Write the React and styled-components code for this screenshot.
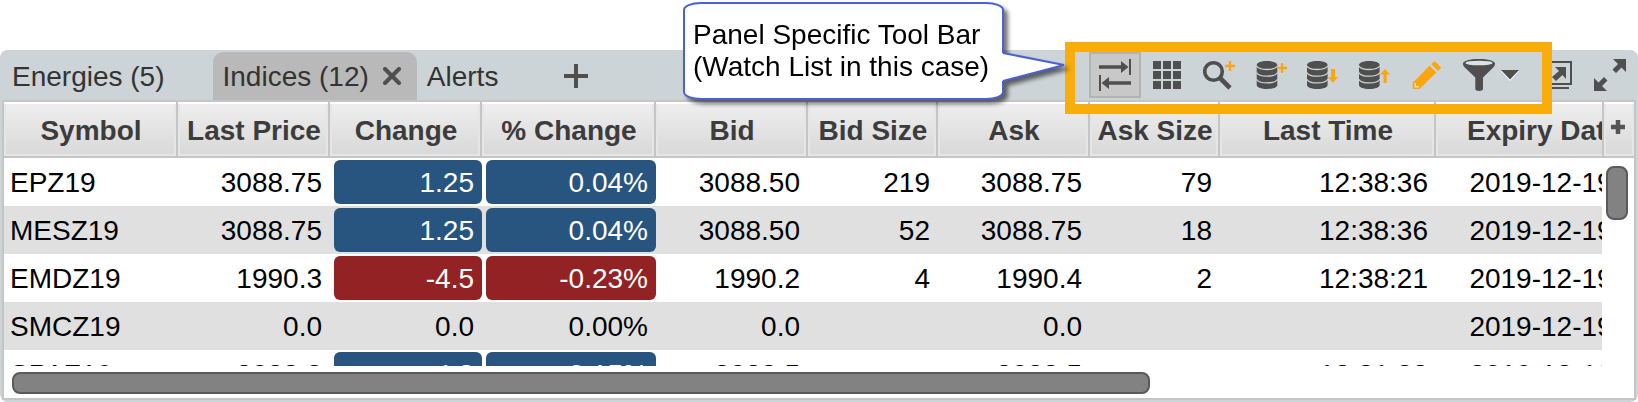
import React, { useState } from "react";
import styled, { createGlobalStyle, css } from "styled-components";

const columns = [
  { key: "symbol", label: "Symbol", width: 174, align: "left" },
  { key: "last", label: "Last Price", width: 152 },
  { key: "change", label: "Change", width: 152, chip: true },
  { key: "percent", label: "% Change", width: 174, chip: true },
  { key: "bid", label: "Bid", width: 152 },
  { key: "bidSize", label: "Bid Size", width: 130 },
  { key: "ask", label: "Ask", width: 152 },
  { key: "askSize", label: "Ask Size", width: 130 },
  { key: "time", label: "Last Time", width: 216 },
  { key: "expiry", label: "Expiry Date", width: 216, align: "center" },
];

const rows = [
  {
    symbol: "EPZ19", last: "3088.75", change: "1.25", percent: "0.04%", trend: "up",
    bid: "3088.50", bidSize: "219", ask: "3088.75", askSize: "79",
    time: "12:38:36", expiry: "2019-12-19",
  },
  {
    symbol: "MESZ19", last: "3088.75", change: "1.25", percent: "0.04%", trend: "up",
    bid: "3088.50", bidSize: "52", ask: "3088.75", askSize: "18",
    time: "12:38:36", expiry: "2019-12-19",
  },
  {
    symbol: "EMDZ19", last: "1990.3", change: "-4.5", percent: "-0.23%", trend: "down",
    bid: "1990.2", bidSize: "4", ask: "1990.4", askSize: "2",
    time: "12:38:21", expiry: "2019-12-19",
  },
  {
    symbol: "SMCZ19", last: "0.0", change: "0.0", percent: "0.00%",
    bid: "0.0", bidSize: "", ask: "0.0", askSize: "",
    time: "", expiry: "2019-12-19",
  },
  {
    symbol: "SPAZ19", last: "3088.3", change: "4.8", percent: "0.15%", trend: "up",
    bid: "3088.5", bidSize: "", ask: "3088.5", askSize: "",
    time: "12:31:33", expiry: "2019-12-19",
  },
];

const tabs = ["Energies (5)", "Indices (12)", "Alerts"];

const Discs = ({ x = 0 }) => (
  <g transform={`translate(${x} 0)`}>
    <path d="M0 6C0 3.6 4.5 2 10.3 2s10.3 1.6 10.3 4v20c0 2.4-4.5 4-10.3 4S0 28.400 0 26z" />
    <g fill="none" stroke="#cdd4d7" strokeWidth="1.300">
      <path d="M-.3 6.800c1.500 2.600 5.400 3.700 10.600 3.700s9.100-1.100 10.600-3.700" />
      <path d="M-.3 13.500c1.500 2.600 5.400 3.700 10.600 3.700s9.100-1.100 10.600-3.700" />
      <path d="M-.3 20.200c1.500 2.600 5.400 3.700 10.600 3.700s9.100-1.100 10.600-3.700" />
    </g>
  </g>
);

const SwapIcon = () => (
  <Icon viewBox="0 0 32 32">
    <path d="M0 6.200h22V2l7.500 6-7.500 6V9.800H0zM30 0h2v16h-2z" />
    <path d="M32 22.200H10V18l-7.500 6 7.500 6v-4.200h22zM0 16h2v16H0z" />
  </Icon>
);

const GridIcon = () => (
  <Icon viewBox="0 0 32 32">
    {[2, 12, 22].map((y) =>
      [2, 12, 22].map((x) => <rect key={`${x}-${y}`} x={x} y={y} width="8" height="8" />)
    )}
  </Icon>
);

const FindIcon = () => (
  <Icon viewBox="0 0 32 32">
    <circle cx="10.500" cy="12.500" r="8.800" fill="none" stroke="#4f4f4f" strokeWidth="3.600" />
    <path d="M17 19l10 10" stroke="#4f4f4f" strokeWidth="4.600" />
    <path d="M27 2v10M22 7h10" stroke="#f9a51a" strokeWidth="2.400" />
  </Icon>
);

const DataAddIcon = () => (
  <Icon viewBox="0 0 32 32">
    <Discs x={1.7} />
    <path d="M27 4v10M22 9h10" stroke="#f9a51a" strokeWidth="2.400" />
  </Icon>
);

const DataDownIcon = () => (
  <Icon viewBox="0 0 32 32">
    <Discs />
    <path d="M24 10h4v8h3l-5 6-5-6h3z" fill="#fda50f" />
  </Icon>
);

const DataUpIcon = () => (
  <Icon viewBox="0 0 32 32">
    <Discs />
    <path d="M24.500 24h3.200v-8.500H31L26 10l-5 5.500h3.500z" fill="#fda50f" />
  </Icon>
);

const PencilIcon = () => (
  <Icon viewBox="0 0 32 32">
    <g fill="#fda50f">
      <path d="M1.700 23.700L18.500 6.700l6.800 6.800L8.500 30H1.700z" />
      <path d="M20.300 5.200L23.500 2l6.700 6.600-3.300 3.300z" />
    </g>
    <path d="M4.200 24v3.700h3.700" fill="none" stroke="#f3e3c2" strokeWidth="1.400" />
  </Icon>
);

const FilterIcon = () => (
  <Icon viewBox="0 0 32 32">
    <path d="M0 4.500C0 2 7 0 16 0s16 2 16 4.500c0 1.800-.6 2.800-1.800 4L20 18.500V30c0 2.600-7.700 2.600-7.700 0V18.500L1.800 8.500C.6 7.300 0 6.300 0 4.500z" />
    <ellipse cx="16" cy="4" rx="13.500" ry="2.300" fill="#dde2e4" />
  </Icon>
);

const PopOutIcon = () => (
  <Icon viewBox="0 0 32 32">
    <path d="M7 3h22v22H7z" fill="none" stroke="#4f4f4f" strokeWidth="2" />
    <path d="M2 6v23h25" fill="none" stroke="#4f4f4f" strokeWidth="2" />
    <path d="M13 8h11v12l-3.500-4-6.500 6-4-4 7-6z" />
  </Icon>
);

const ExpandIcon = () => (
  <Icon viewBox="0 0 32 32">
    <path d="M19 0h13v13l-4.500-4.500-5.500 5.500-3.500-3.500 5.500-5.500z" />
    <path d="M13 32H0V19l4.500 4.500 5.500-5.500 3.500 3.500-5.500 5.500z" />
  </Icon>
);

const tools = [
  { label: "Toggle order columns", icon: <SwapIcon />, pressed: true },
  { label: "Grid view", icon: <GridIcon /> },
  { label: "Find symbol", icon: <FindIcon /> },
  { label: "Add list", icon: <DataAddIcon /> },
  { label: "Download list", icon: <DataDownIcon /> },
  { label: "Upload list", icon: <DataUpIcon /> },
  { label: "Edit list", icon: <PencilIcon /> },
];

function App() {
  const [active, setActive] = useState(1);

  return (
    <Page>
      <GlobalStyle />
      <Panel>
        <TopBar>
          <Tabs>
            {tabs.map((tab, i) => (
              <Tab key={tab} $active={i === active}>
                <TabLabel onClick={() => setActive(i)}>{tab}</TabLabel>
                <CloseButton aria-label={`Close ${tab}`} $shown={i === active}>
                  <svg width="18" height="18" viewBox="0 0 18 18">
                    <path d="M2 2l14 14M16 2L2 16" stroke="#4f4f4f" strokeWidth="4" strokeLinecap="round" />
                  </svg>
                </CloseButton>
              </Tab>
            ))}
            <AddTab aria-label="Add tab">
              <svg width="24" height="24" viewBox="0 0 24 24">
                <path d="M12 0v24M0 12h24" stroke="#4f4f4f" strokeWidth="4" />
              </svg>
            </AddTab>
          </Tabs>

          <ToolGroup>
            {tools.map((tool) => (
              <ToolButton key={tool.label} aria-label={tool.label} $pressed={tool.pressed}>
                {tool.icon}
              </ToolButton>
            ))}
            <ToolButton aria-label="Filter">
              <FilterIcon />
              <svg width="18" height="12" viewBox="0 0 18 12">
                <path d="M0 2h18L9 12z" fill="#fff" />
                <path d="M0 1h18L9 10.500z" fill="#4f4f4f" />
              </svg>
            </ToolButton>
            <Highlight />
            <Callout>
              Panel Specific Tool Bar
              <br />
              (Watch List in this case)
              <Pointer width="64" height="34" viewBox="0 0 64 34">
                <path d="M0 3h2l60 12L2 31H0z" fill="#fff" />
                <path d="M1 3l61 12L1 31" fill="none" stroke="#4a60d4" strokeWidth="2" />
              </Pointer>
            </Callout>
          </ToolGroup>

          <ToolButton aria-label="Open in new window">
            <PopOutIcon />
          </ToolButton>
          <ToolButton aria-label="Maximize">
            <ExpandIcon />
          </ToolButton>
        </TopBar>

        <Content>
          <Main>
            <Viewport>
              <Table>
                <colgroup>
                  {columns.map((col) => (
                    <Col key={col.key} $width={col.width} />
                  ))}
                </colgroup>
                <thead>
                  <tr>
                    {columns.map((col) => (
                      <HeaderCell key={col.key} scope="col">
                        {col.label}
                      </HeaderCell>
                    ))}
                  </tr>
                </thead>
                <tbody>
                  {rows.map((row) => (
                    <Row key={row.symbol}>
                      {columns.map((col) => (
                        <Cell key={col.key} $align={col.align} $chip={col.chip}>
                          {col.chip ? <Chip $trend={row.trend}>{row[col.key]}</Chip> : row[col.key]}
                        </Cell>
                      ))}
                    </Row>
                  ))}
                </tbody>
              </Table>
            </Viewport>
            <Side>
              <AddColumn aria-label="Add column">
                <svg width="14" height="14" viewBox="0 0 14 14">
                  <path d="M7 0v14M0 7h14" stroke="#555" strokeWidth="4.500" />
                </svg>
              </AddColumn>
              <VerticalThumb />
            </Side>
          </Main>
          <HorizontalTrack>
            <HorizontalThumb />
          </HorizontalTrack>
        </Content>
      </Panel>
    </Page>
  );
}

const GlobalStyle = createGlobalStyle`
  * {
    box-sizing: border-box;
  }
  body {
    margin: 0;
    background: #fff;
    font-family: "Liberation Sans", Arial, sans-serif;
    font-size: 28px;
  }
  button {
    margin: 0;
    padding: 0;
    border: 0;
    background: none;
    font: inherit;
    color: inherit;
    cursor: pointer;
  }
  svg {
    display: block;
    flex: none;
  }
`;

const headerSurface = css`
  background: linear-gradient(#efefef, #d8d8d8);
  box-shadow: inset 0 2px #fff, inset 0 0 0 2px #e6e6e6;
  border-bottom: 2px solid #c5c5c5;
`;

const thumb = css`
  background: #828282;
  border: 2px solid #5a5a5a;
  border-radius: 8px;
`;

const Page = styled.div`
  display: flex;
  flex-direction: column;
  height: 100vh;
  padding-top: 50px;
  overflow: hidden;
`;

const Panel = styled.section`
  flex: 1;
  min-height: 0;
  display: flex;
  flex-direction: column;
  padding: 0 2px 2px;
  border-radius: 8px;
  background: #cdd4d7;
`;

const TopBar = styled.header`
  display: flex;
  align-items: center;
  height: 50px;
  flex: none;
`;

const Tabs = styled.nav`
  display: flex;
  flex: 1;
  align-self: stretch;
  padding-top: 2px;
`;

const Tab = styled.div`
  display: flex;
  align-items: center;
  gap: 14px;
  padding: 0 16px 0 10px;
  border-radius: 10px 10px 0 0;
  color: #333;
  background: ${(props) => (props.$active ? "#b9b9b9" : "transparent")};
`;

const TabLabel = styled.button`
  padding-top: 2px;
  line-height: 46px;
  white-space: nowrap;
`;

const CloseButton = styled.button`
  visibility: ${(props) => (props.$shown ? "visible" : "hidden")};
`;

const AddTab = styled.button`
  padding: 0 18px;
`;

const ToolGroup = styled.div`
  position: relative;
  display: flex;
  align-items: center;
  height: 50px;
  padding-right: 3px;
`;

const ToolButton = styled.button`
  display: flex;
  align-items: center;
  gap: 6px;
  height: 46px;
  padding: 0 8px;
  border: 2px solid ${(props) => (props.$pressed ? "#b3b3b3" : "transparent")};
  background: ${(props) => (props.$pressed ? "#c8c8c8" : "transparent")};
`;

const Icon = styled.svg`
  width: 32px;
  height: 32px;
  fill: #4f4f4f;
`;

/* frame drawn around the tool group */
const Highlight = styled.div`
  position: absolute;
  inset: -8px -20px -14px -24px;
  border: 10px solid #f9ad0b;
  pointer-events: none;
`;

const Callout = styled.div`
  position: absolute;
  top: -48px;
  right: calc(100% + 85px);
  width: 321px;
  padding: 15px 8px;
  border: 2px solid #4a60d4;
  border-radius: 18px / 8px;
  background: #fff;
  color: #000;
  line-height: 32px;
  white-space: nowrap;
  filter: drop-shadow(4px 4px 2px rgba(0, 0, 0, 0.55));
`;

const Pointer = styled.svg`
  position: absolute;
  left: 100%;
  top: 46px;
`;

const Content = styled.div`
  flex: 1;
  min-height: 0;
  display: flex;
  flex-direction: column;
  border: 2px solid #c5c5c5;
  background: #fff;
`;

const Main = styled.div`
  flex: 1;
  min-height: 0;
  display: flex;
`;

const Viewport = styled.div`
  flex: 1;
  min-width: 0;
  overflow: hidden;
`;

const Table = styled.table`
  width: max-content;
  table-layout: fixed;
  border-collapse: separate;
  border-spacing: 0;
`;

const Col = styled.col`
  width: ${(props) => props.$width}px;
`;

const HeaderCell = styled.th`
  ${headerSurface}
  height: 56px;
  padding: 4px 0 0 2px;
  border-right: 2px solid #c5c5c5;
  color: #3c3c3c;
  white-space: nowrap;
`;

const Row = styled.tr`
  background: #fff;
  &:nth-child(even) {
    background: #e0e0e0;
  }
`;

const cellPadding = ({ $chip, $align }) => {
  if ($chip) return "2px 0 2px 4px";
  if ($align === "center") return "2px 12px 0 6px";
  return "2px 8px 0 6px";
};

const Cell = styled.td`
  height: 48px;
  padding: ${cellPadding};
  color: #000;
  text-align: ${(props) => props.$align || "right"};
  white-space: nowrap;
`;

const chipColors = { up: "#28557f", down: "#932224" };

const Chip = styled.div`
  padding: 2px 8px 0 0;
  border-radius: 6px;
  line-height: 42px;
  color: ${(props) => (props.$trend ? "#fff" : "#000")};
  background: ${(props) => chipColors[props.$trend] || "transparent"};
`;

const Side = styled.div`
  display: flex;
  flex-direction: column;
  width: 32px;
`;

const AddColumn = styled.button`
  ${headerSurface}
  display: flex;
  align-items: center;
  justify-content: center;
  height: 56px;
  padding: 0 2px 4px 0;
  border-left: 2px solid #c5c5c5;
`;

const VerticalThumb = styled.div`
  ${thumb}
  width: 22px;
  height: 54px;
  margin: 8px 4px;
`;

const HorizontalTrack = styled.div`
  padding: 6px 8px 4px;
`;

const HorizontalThumb = styled.div`
  ${thumb}
  width: calc(71% - 8px);
  height: 22px;
`;

export default App;
